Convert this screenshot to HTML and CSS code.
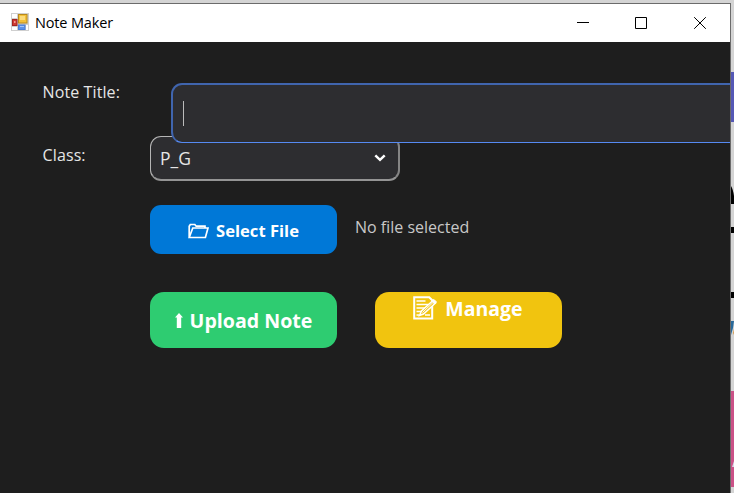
FILE: index.html
```html
<!DOCTYPE html>
<html lang="en">
<head>
<meta charset="utf-8">
<title>Note Maker</title>
<link rel="stylesheet" href="styles.css">
</head>
<body>
<div class="desktop">
  <main class="window">
    <header class="titlebar">
      <svg class="app-icon" width="18" height="18" viewBox="0 0 18 18">
        <rect width="18" height="18" fill="#cfcfcf"/>
        <path d="M1 1h5v4H1zM1 14h5v3H1zM15 12h2v5h-2z" fill="#fff"/>
        <rect x="7.500" y="1.500" width="8.500" height="8.500" fill="#f3c13a" stroke="#b98a1c"/>
        <rect x="9" y="3" width="5" height="4" fill="#fbdc7c"/>
        <rect x="1.500" y="6.500" width="4.500" height="6" fill="#cf3b34" stroke="#a32622"/>
        <rect x="3" y="8" width="1.500" height="2" fill="#f19a92"/>
        <rect x="7.500" y="12" width="6.500" height="4.500" fill="#5b91e8" stroke="#4a7fd8"/>
        <rect x="9" y="13" width="4" height="1" fill="#a3c5fa"/>
      </svg>
      <h1 class="title">Note Maker</h1>
      <div class="controls">
        <svg width="12" height="12" viewBox="0 0 12 12"><path d="M0 5.500h12"/></svg>
        <svg width="12" height="12" viewBox="0 0 12 12"><path d="M.5.5h11v11H.5z"/></svg>
        <svg width="12" height="12" viewBox="0 0 12 12"><path d="M.2.2l11.600 11.600M11.800.2L.2 11.800"/></svg>
      </div>
    </header>
    <form class="form">
      <label class="label label-title">Note Title:</label>
      <div class="title-field"><i class="caret"></i></div>
      <label class="label label-class">Class:</label>
      <div class="select">
        <span>P_G</span>
        <svg width="12" height="8" viewBox="0 0 12 8"><path d="M1.300 1.300L6 5.800l4.700-4.500"/></svg>
      </div>
      <div class="file-row">
        <button type="button" class="btn btn-select">
          <svg width="21" height="16" viewBox="0 0 21 16"><path d="M1.200 14.500V3.200L2.300 1.500h4.500l1.400 1.700H17v1.600M1.200 14.500L4.800 5H20l-2.600 9.500z"/></svg>
          <span>Select File</span>
        </button>
        <span class="file-name">No file selected</span>
      </div>
      <div class="actions">
        <button type="button" class="btn btn-upload">
          <svg width="8" height="15" viewBox="0 0 8 15"><path d="M4 0l4 4.500H6.200V15H1.800V4.500H0z"/></svg>
          <span>Upload Note</span>
        </button>
        <button type="button" class="btn btn-manage">
          <svg width="24" height="24" viewBox="0 0 24 24">
            <path d="M1.200 1.200h15l3 3v18.300h-18z" stroke-width="2"/>
            <path d="M3.500 5h9M3.500 8.500h12M3.500 12h9M3.500 15.500h5M3.500 19h3M12 19h5" stroke-width="1.300"/>
            <path d="M6.500 19.500l2-4.500L20 4.500l2.500 2.500L10.500 18z" fill="#f1c40f" stroke-width="1.500"/>
            <path d="M9.500 16.500L20 6.500" stroke-width="1"/>
            <path d="M19 5l2-1.500L23.500 6l-2 2z" fill="#fff" stroke-width="1"/>
          </svg>
          <span>Manage</span>
        </button>
      </div>
    </form>
  </main>
  <svg class="backdrop" width="3" height="493" viewBox="0 0 3 493">
    <rect y="72" width="3" height="50" fill="#5558b5"/>
    <path d="M0 186q2 3 3 10v8H0zM0 227h3v6H0zM0 292h3v6H0z" fill="#000"/>
    <path d="M0 321h3l-1 7-2 7z" fill="#286a9b"/>
    <path d="M2 333l1-4v6z" fill="#d79b4b"/>
    <path d="M0 391h3v96H0z" fill="#ca5287"/>
    <path d="M1 467l2-6v6z" fill="#d9d9e8"/>
  </svg>
</div>
</body>
</html>
```

FILE: styles.css
```css
* { box-sizing: border-box; }

body {
  margin: 0;
  overflow: hidden;
  font-family: "Open Sans", "Noto Sans", sans-serif;
}

.desktop {
  display: flex;
  width: 734px;
  height: 493px;
  background: #d4d4d4;
}

.window {
  width: 731px;
  height: 490px;
  margin-top: 3px;
  flex: none;
  display: flex;
  flex-direction: column;
  border-top: 1px solid #6b6b6b;
  border-right: 1px solid #6b6b6b;
  background: #1e1e1e;
}

.titlebar {
  display: flex;
  align-items: center;
  height: 38px;
  flex: none;
  padding: 0 24px 0 11px;
  background: #fff;
}

.app-icon { margin: 0 6px 2px 0; }

.title {
  margin: 0 0 2px;
  font-size: 14.500px;
  font-weight: 400;
  letter-spacing: -0.150px;
  color: #000;
}

.controls {
  display: flex;
  gap: 46px;
  margin: 0 0 0 auto;
}

.controls svg { fill: none; stroke: #000; }
.controls svg:first-child { margin-right: 0; }
.controls svg:not(:last-child) { position: relative; left: -1px; }

.form {
  display: grid;
  grid-template-columns: 108px 1fr;
  grid-template-rows: 53px 44px 74px 95px;
  padding: 41px 0 0 42px;
  overflow: hidden;
  color: #e6e6e6;
}

.label {
  padding-left: 0.600px;
  font-size: 16px;
  line-height: 18px;
  letter-spacing: 0.100px;
}

.title-field {
  position: relative;
  z-index: 1;
  height: 60px;
  margin: 0 -14px 0 21px;
  padding: 16px 10px;
  border: 2px solid #4065ae;
  border-bottom: 1px solid #568af2;
  border-radius: 11px;
  background: #2d2d30;
}

.caret {
  display: block;
  width: 1px;
  height: 25px;
  background: #bbb;
}

.label-class { padding-top: 10px; }

.select {
  display: flex;
  justify-content: space-between;
  align-items: center;
  width: 250px;
  height: 45px;
  padding: 0 12px 1px 9px;
  border: 1px solid #b5b5b5;
  border-bottom: 2px solid #949494;
  border-right: 2px solid #858585;
  border-radius: 11px;
  background: #2d2d30;
  font-size: 17.500px;
}

.select svg { fill: none; stroke: #fff; stroke-width: 2.500; }

.file-row, .actions {
  grid-column: 2;
  display: flex;
}

.file-row { margin-top: 25px; height: 49px; }
.actions { margin-top: 38px; gap: 38px; height: 56px; }

.file-name {
  margin: 12px 0 0 18px;
  font-size: 16px;
  line-height: 20px;
  color: #c8c8c8;
}

.btn {
  display: flex;
  justify-content: center;
  align-items: center;
  width: 187px;
  padding: 0;
  border: 0;
  border-radius: 14px;
  font-family: inherit;
  font-weight: 700;
  color: #fff;
  white-space: nowrap;
}

.btn-select {
  gap: 7px;
  padding-top: 2px;
  border-radius: 11px;
  background: #0078d7;
  font-size: 16.600px;
}

.btn-select svg { fill: none; stroke: #fff; stroke-width: 1.700; }

.btn-upload {
  gap: 7px;
  background: #2ecc71;
  font-size: 19.600px;
}

.btn-upload svg { fill: #fff; }

.btn-manage {
  align-items: flex-start;
  gap: 8px;
  padding: 4px 1px 0 0;
  background: #f1c40f;
  font-size: 19.500px;
  line-height: 25px;
}

.btn-manage svg { fill: none; stroke: #fff; }

.backdrop { display: block; }
```
